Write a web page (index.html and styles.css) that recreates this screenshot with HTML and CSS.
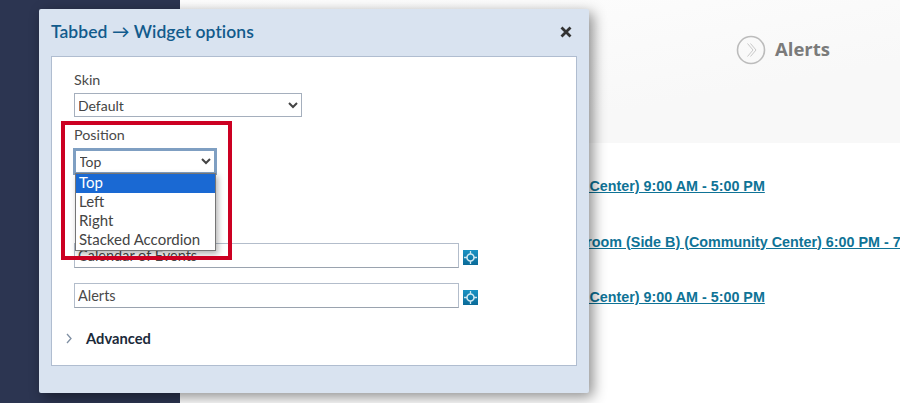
FILE: index.html
```html
<!DOCTYPE html>
<html lang="en">
<head>
<meta charset="utf-8">
<title>Tabbed Widget options</title>
<link rel="stylesheet" href="styles.css">
</head>
<body>
<div class="page">
  <aside class="sidebar"></aside>
  <main class="main">
    <header class="hero">
      <div class="hero-tab">
        <svg class="hero-icon" width="30" height="30" viewBox="0 0 30 30" aria-hidden="true">
          <circle cx="15" cy="15" r="13.5" fill="none" stroke="#bcbcbc" stroke-width="1.6"/>
          <path d="M11.5 8.5 17 15l-5.500 6.500M14.500 8.500 20 15l-5.500 6.500" fill="none" stroke="#c9c9c9" stroke-width="1"/>
        </svg>
        <span class="hero-title">Alerts</span>
      </div>
    </header>
    <ul class="events">
      <li><a href="#">Hub (Community Center) 9:00 AM - 5:00 PM</a></li>
      <li><a href="#">Recreational Ballroom (Side B) (Community Center) 6:00 PM - 7:00 PM</a></li>
      <li><a href="#">Hub (Community Center) 9:00 AM - 5:00 PM</a></li>
    </ul>
  </main>
</div>

<section class="modal">
  <div class="modal-head">
    <h1 class="modal-title">Tabbed → Widget options</h1>
    <svg class="modal-close" width="12" height="12" viewBox="0 0 12 12" aria-hidden="true">
      <path d="M1.500 1.500l9 9M10.500 1.500l-9 9" stroke="#333" stroke-width="2.800" fill="none"/>
    </svg>
  </div>
  <div class="modal-body">
    <label class="label">Skin</label>
    <select class="select select-skin"><option>Default</option></select>
    <label class="label label-position">Position</label>
    <div class="position-wrap">
      <select class="select select-position"><option>Top</option></select>
      <div class="listbox">
        <div class="option option-active">Top</div>
        <div class="option">Left</div>
        <div class="option">Right</div>
        <div class="option">Stacked Accordion</div>
      </div>
    </div>
    <div class="tab-row">
      <input class="text-input" type="text" value="Calendar of Events">
      <svg class="target" width="15" height="15" viewBox="0 0 15 15" aria-hidden="true">
        <defs><linearGradient id="tg" x1="0" y1="0" x2="0" y2="1"><stop offset="0" stop-color="#1a93c4"/><stop offset="1" stop-color="#0a6a98"/></linearGradient></defs>
        <rect width="15" height="15" fill="url(#tg)"/>
        <circle cx="7.500" cy="7.500" r="3.500" fill="none" stroke="#cfe8f2" stroke-width="1.600"/>
        <path d="M7.500 1v3M7.500 11v3M1 7.500h3M11 7.500h3" stroke="#cfe8f2" stroke-width="1.300"/>
      </svg>
    </div>
    <div class="tab-row">
      <input class="text-input" type="text" value="Alerts">
      <svg class="target" width="15" height="15" viewBox="0 0 15 15" aria-hidden="true">
        <rect width="15" height="15" fill="url(#tg)"/>
        <circle cx="7.500" cy="7.500" r="3.500" fill="none" stroke="#cfe8f2" stroke-width="1.600"/>
        <path d="M7.500 1v3M7.500 11v3M1 7.500h3M11 7.500h3" stroke="#cfe8f2" stroke-width="1.300"/>
      </svg>
    </div>
    <div class="advanced">
      <svg class="advanced-chevron" width="6" height="11" viewBox="0 0 6 11" aria-hidden="true">
        <path d="M1 1l4 4.500L1 10" fill="none" stroke="#7f8fa3" stroke-width="1.300"/>
      </svg>
      <span class="advanced-label">Advanced</span>
    </div>
  </div>
</section>
<div class="highlight"></div>
</body>
</html>
```

FILE: styles.css
```css
* { box-sizing: border-box; }
html, body { margin: 0; height: 100%; overflow: hidden; background: #fff; }
body { font-family: "Lato", "Liberation Sans", sans-serif; position: relative; }

.page { display: flex; height: 403px; width: 900px; overflow: hidden; }
.sidebar { flex: 0 0 180px; background: #2c3551; }
.main { flex: 1 1 auto; min-width: 0; }

.hero {
  height: 143px;
  background: linear-gradient(170deg, #fefefe 0%, #f8f8f8 70%);
  display: flex;
  justify-content: flex-end;
  padding: 35px 70px 0 0;
}
.hero-tab { display: flex; align-items: flex-start; gap: 9px; }
.hero-title { font: 700 18.500px/28px "Open Sans", sans-serif; color: #7b7b7b; }

.events {
  list-style: none;
  margin: 0;
  padding: 34px 0 0 290px;
  white-space: nowrap;
  font: bold 14.330px/18px "Liberation Sans", sans-serif;
}
.events li { margin-bottom: 37.500px; height: 18px; }
.events a { color: #0f7396; text-decoration: underline; }

.modal {
  position: absolute;
  left: 39px;
  top: 9px;
  width: 550px;
  height: 384px;
  background: #d9e3f0;
  border-radius: 2px;
  box-shadow: 4px 4px 14px rgba(0, 0, 0, .45);
  padding: 0 12px;
}
.modal-head { height: 47px; display: flex; align-items: center; justify-content: space-between; padding: 0 5px 2px 0; }
.modal-title { margin: 0; font: 600 17.500px/1 "Lato", sans-serif; color: #125b8c; letter-spacing: .06px; }
.modal-body {
  height: 310px;
  background: #fff;
  border: 1px solid #b0bdd0;
  padding: 14px 22px 0;
}
.label { display: block; font-size: 14.300px; line-height: 18px; color: #4a4a4a; }
.select {
  display: block;
  font: 14px "Lato", sans-serif;
  color: #444;
  background: #fff;
  border: 1px solid #a5afbd;
  border-radius: 0;
  padding: 0;
  margin-top: 4px;
  text-indent: -1px;
}
.select-skin { width: 228px; height: 24px; }
.label-position { margin-top: 9px; }
.position-wrap { position: relative; height: 95px; margin-top: 4px; }
.select-position {
  width: 144px;
  height: 27px;
  margin: 0 0 0 -1px;
  border: 3px solid #7f9fc2;
  padding: 0;
}
.listbox {
  position: absolute;
  z-index: 2;
  left: 1px;
  top: 25px;
  width: 141px;
  background: #fff;
  border: 1px solid #767676;
  box-shadow: 2px 3px 6px rgba(0, 0, 0, .3);
}
.option { height: 19px; padding-left: 3px; font-size: 15px; line-height: 17px; color: #444; }
.option-active { background: #1a69d3; color: #fff; }
.tab-row { display: flex; align-items: flex-start; gap: 4px; height: 25px; margin-bottom: 15px; }
.text-input {
  width: 385px;
  height: 25px;
  border: 1px solid #b3bdcb;
  border-bottom-color: #9aa3af;
  padding: 0 3px;
  font: 14.500px "Lato", sans-serif;
  color: #4a4a4a;
}
.target { flex: none; margin-top: 7px; }
.advanced { display: flex; align-items: center; gap: 14px; margin: 20px 0 0 -8px; height: 20px; }
.advanced-label { font-size: 14.700px; font-weight: 700; color: #1b2a3a; }

.highlight {
  position: absolute;
  z-index: 3;
  left: 61px;
  top: 121px;
  width: 171px;
  height: 139px;
  border: 4px solid #cc0022;
  pointer-events: none;
}
```
